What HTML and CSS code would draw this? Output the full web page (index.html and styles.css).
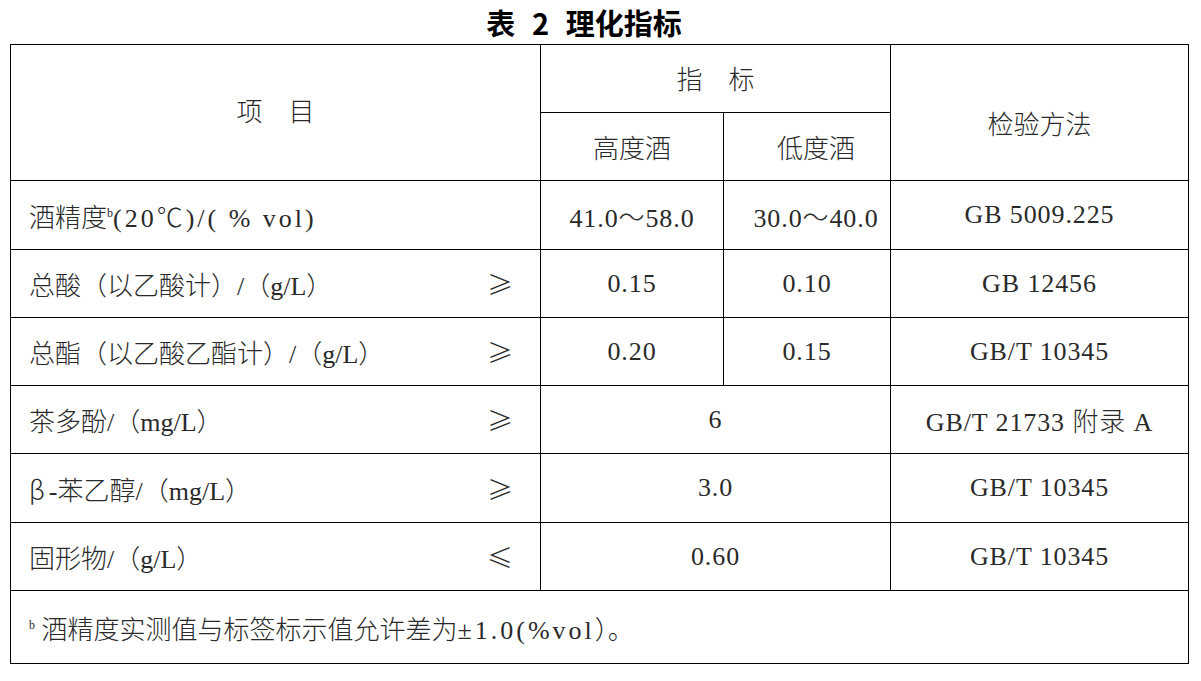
FILE: index.html
```html
<!DOCTYPE html>
<html lang="zh-CN">
<head>
<meta charset="utf-8">
<title>表 2 理化指标</title>
<link rel="stylesheet" href="styles.css">
</head>
<body>
<div class="page">
  <h1 class="title">表 2 理化指标</h1>
  <table class="spec">
    <colgroup>
      <col class="c-item">
      <col class="c-high">
      <col class="c-low">
      <col class="c-method">
    </colgroup>
    <thead>
      <tr class="r-head">
        <th rowspan="2" class="h-item">项　目</th>
        <th colspan="2" class="h-index">指　标</th>
        <th rowspan="2" class="h-method">检验方法</th>
      </tr>
      <tr class="r-head">
        <th>高度酒</th>
        <th class="shift">低度酒</th>
      </tr>
    </thead>
    <tbody>
      <tr class="r-tall">
        <td class="item"><div class="item-row"><span class="name">酒精度<sup>b</sup><span class="lat">(20℃)/( % vol)</span></span></div></td>
        <td class="num">41.0～58.0</td>
        <td class="num shift">30.0～40.0</td>
        <td class="num">GB 5009.225</td>
      </tr>
      <tr>
        <td class="item"><div class="item-row"><span class="name">总酸（以乙酸计）/（g/L）</span><span class="cmp">≥</span></div></td>
        <td class="num">0.15</td>
        <td class="num">0.10</td>
        <td class="num">GB 12456</td>
      </tr>
      <tr>
        <td class="item"><div class="item-row"><span class="name">总酯（以乙酸乙酯计）/（g/L）</span><span class="cmp">≥</span></div></td>
        <td class="num">0.20</td>
        <td class="num">0.15</td>
        <td class="num">GB/T 10345</td>
      </tr>
      <tr>
        <td class="item"><div class="item-row"><span class="name">茶多酚/（mg/L）</span><span class="cmp">≥</span></div></td>
        <td colspan="2" class="num">6</td>
        <td class="num">GB/T 21733 附录 A</td>
      </tr>
      <tr class="r-tall">
        <td class="item"><div class="item-row"><span class="name"><span class="beta">β</span>-苯乙醇/（mg/L）</span><span class="cmp">≥</span></div></td>
        <td colspan="2" class="num">3.0</td>
        <td class="num">GB/T 10345</td>
      </tr>
      <tr>
        <td class="item"><div class="item-row"><span class="name">固形物/（g/L）</span><span class="cmp">≤</span></div></td>
        <td colspan="2" class="num">0.60</td>
        <td class="num">GB/T 10345</td>
      </tr>
    </tbody>
    <tfoot>
      <tr class="r-note">
        <td colspan="4" class="note"><sup>b</sup> 酒精度实测值与标签标示值允许差为<span class="lat">±1.0(%vol</span>）。</td>
      </tr>
    </tfoot>
  </table>
</div>
</body>
</html>
```

FILE: styles.css
```css
html, body {
  margin: 0;
  padding: 0;
  background: #fff;
}

.page {
  width: 1201px;
  padding-left: 10px;
  box-sizing: border-box;
}

.title {
  margin: 0;
  height: 44px;
  line-height: 44px;
  width: 1178px;
  box-sizing: border-box;
  padding-right: 30px;
  text-align: center;
  font-family: "Noto Sans CJK SC", sans-serif;
  font-weight: 700;
  font-size: 29px;
  word-spacing: 10px;
  color: #000;
}

.spec {
  border-collapse: collapse;
  table-layout: fixed;
  width: 1178px;
  font-family: "Liberation Serif", "Noto Sans CJK SC", serif;
  font-size: 26px;
  font-weight: 300;
  color: #2a2a2a;
}

.c-item { width: 530px; }
.c-high { width: 183px; }
.c-low { width: 167px; }
.c-method { width: 298px; }

.spec th,
.spec td {
  border: 1px solid #000;
  padding: 0;
  text-align: center;
  vertical-align: middle;
  font-weight: 300;
}

.spec tr { height: 68px; }
.spec tr.r-tall { height: 69px; }
.spec tr.r-note { height: 73px; }

.spec .h-item { padding-bottom: 6px; }
.spec .h-index { padding-bottom: 3px; }
.spec .h-method { padding-top: 20px; }

.spec .shift { padding-left: 18px; }

.spec .num { letter-spacing: 0.9px; }

.spec .lat { letter-spacing: 3px; }

.spec td.item { text-align: left; padding: 0 27px 0 18px; }

.item-row {
  display: flex;
  justify-content: space-between;
  align-items: center;
}

.cmp, .beta {
  font-family: "Noto Sans CJK SC", sans-serif;
}

.beta { margin-right: 4px; }

.spec sup {
  font-size: 12px;
  vertical-align: 10px;
  line-height: 0;
}

.spec td.note {
  text-align: left;
  padding-left: 18px;
}
```
